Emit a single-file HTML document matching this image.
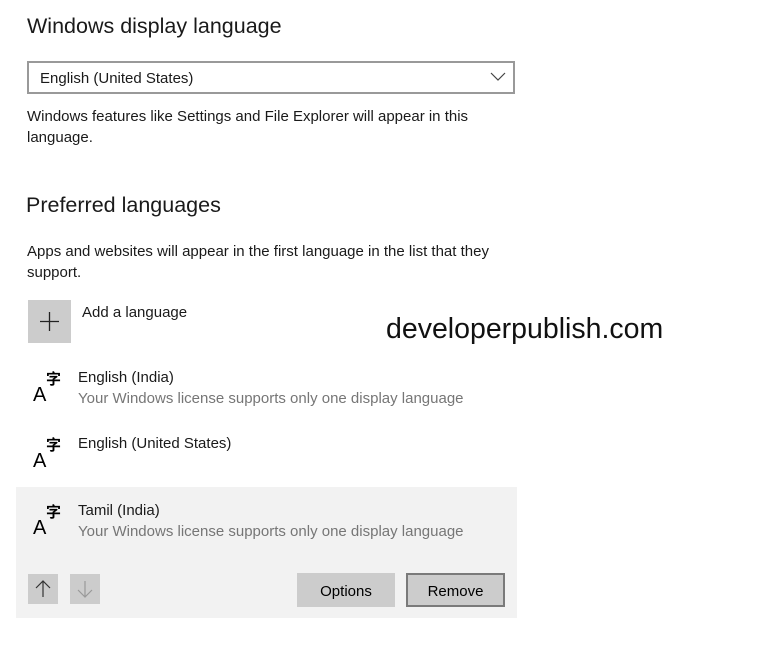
<!DOCTYPE html>
<html><head><meta charset="utf-8"><style>
*{margin:0;padding:0;box-sizing:border-box}
body{width:768px;height:653px;background:#fff;position:relative;overflow:hidden;font-family:"Liberation Sans","Noto Sans CJK SC",sans-serif;color:#000}
.a{position:absolute;white-space:nowrap}
.h{font-size:21.5px;color:#1a1a1a}
.t{font-size:15px;color:#1a1a1a}
.g{font-size:15px;color:#767676}
.btn{position:absolute;background:#ccc;font-size:15px;text-align:center;color:#000}
.ic{position:absolute;font-size:20px;line-height:1}
</style></head><body>
<div class="a h" style="left:27px;top:14px">Windows display language</div>
<div class="a" style="left:27px;top:61px;width:488px;height:33px;border:2px solid #999"></div>
<div class="a t" style="left:40px;top:70px">English (United States)</div>
<svg class="a" style="left:490px;top:72px" width="16" height="10"><path d="M1 1 L8 8 L15 1" fill="none" stroke="#444" stroke-width="1.2"/></svg>
<div class="a t" style="left:27px;top:106px;line-height:21px">Windows features like Settings and File Explorer will appear in this<br>language.</div>
<div class="a h" style="left:26px;top:193px">Preferred languages</div>
<div class="a t" style="left:27px;top:241px;line-height:21px">Apps and websites will appear in the first language in the list that they<br>support.</div>
<div class="a" style="left:28px;top:300px;width:43px;height:43px;background:#ccc"></div>
<svg class="a" style="left:39px;top:311px" width="21" height="21"><path d="M10.5 1V20M1 10.5H20" stroke="#222" stroke-width="1.3"/></svg>
<div class="a t" style="left:82px;top:304px">Add a language</div>
<div class="a" style="left:386px;top:313px;font-size:28.5px;color:#111">developerpublish.com</div>
<div class="a" style="left:16px;top:487px;width:501px;height:131px;background:#f2f2f2"></div>
<div class="ic a" style="left:33px;top:385px">A</div><div class="a" style="left:46px;top:368px;font-size:15px;font-weight:bold">字</div>
<div class="a t" style="left:78px;top:369px">English (India)</div>
<div class="a g" style="left:78px;top:390px">Your Windows license supports only one display language</div>
<div class="ic a" style="left:33px;top:451px">A</div><div class="a" style="left:46px;top:434px;font-size:15px;font-weight:bold">字</div>
<div class="a t" style="left:78px;top:435px">English (United States)</div>
<div class="ic a" style="left:33px;top:518px">A</div><div class="a" style="left:46px;top:501px;font-size:15px;font-weight:bold">字</div>
<div class="a t" style="left:78px;top:502px">Tamil (India)</div>
<div class="a g" style="left:78px;top:523px">Your Windows license supports only one display language</div>
<div class="btn" style="left:28px;top:574px;width:30px;height:30px"></div>
<svg class="a" style="left:35px;top:580px" width="16" height="18"><path d="M8 1V17M1 8L8 1L15 8" fill="none" stroke="#333" stroke-width="1.2"/></svg>
<div class="btn" style="left:70px;top:574px;width:30px;height:30px"></div>
<svg class="a" style="left:77px;top:580px" width="16" height="18"><path d="M8 1V17M1 10L8 17L15 10" fill="none" stroke="#999" stroke-width="1.2"/></svg>
<div class="btn" style="left:297px;top:573px;width:98px;height:34px;line-height:37px">Options</div>
<div class="btn" style="left:406px;top:573px;width:99px;height:34px;line-height:33px;border:2px solid #7a7a7a">Remove</div>
</body></html>
